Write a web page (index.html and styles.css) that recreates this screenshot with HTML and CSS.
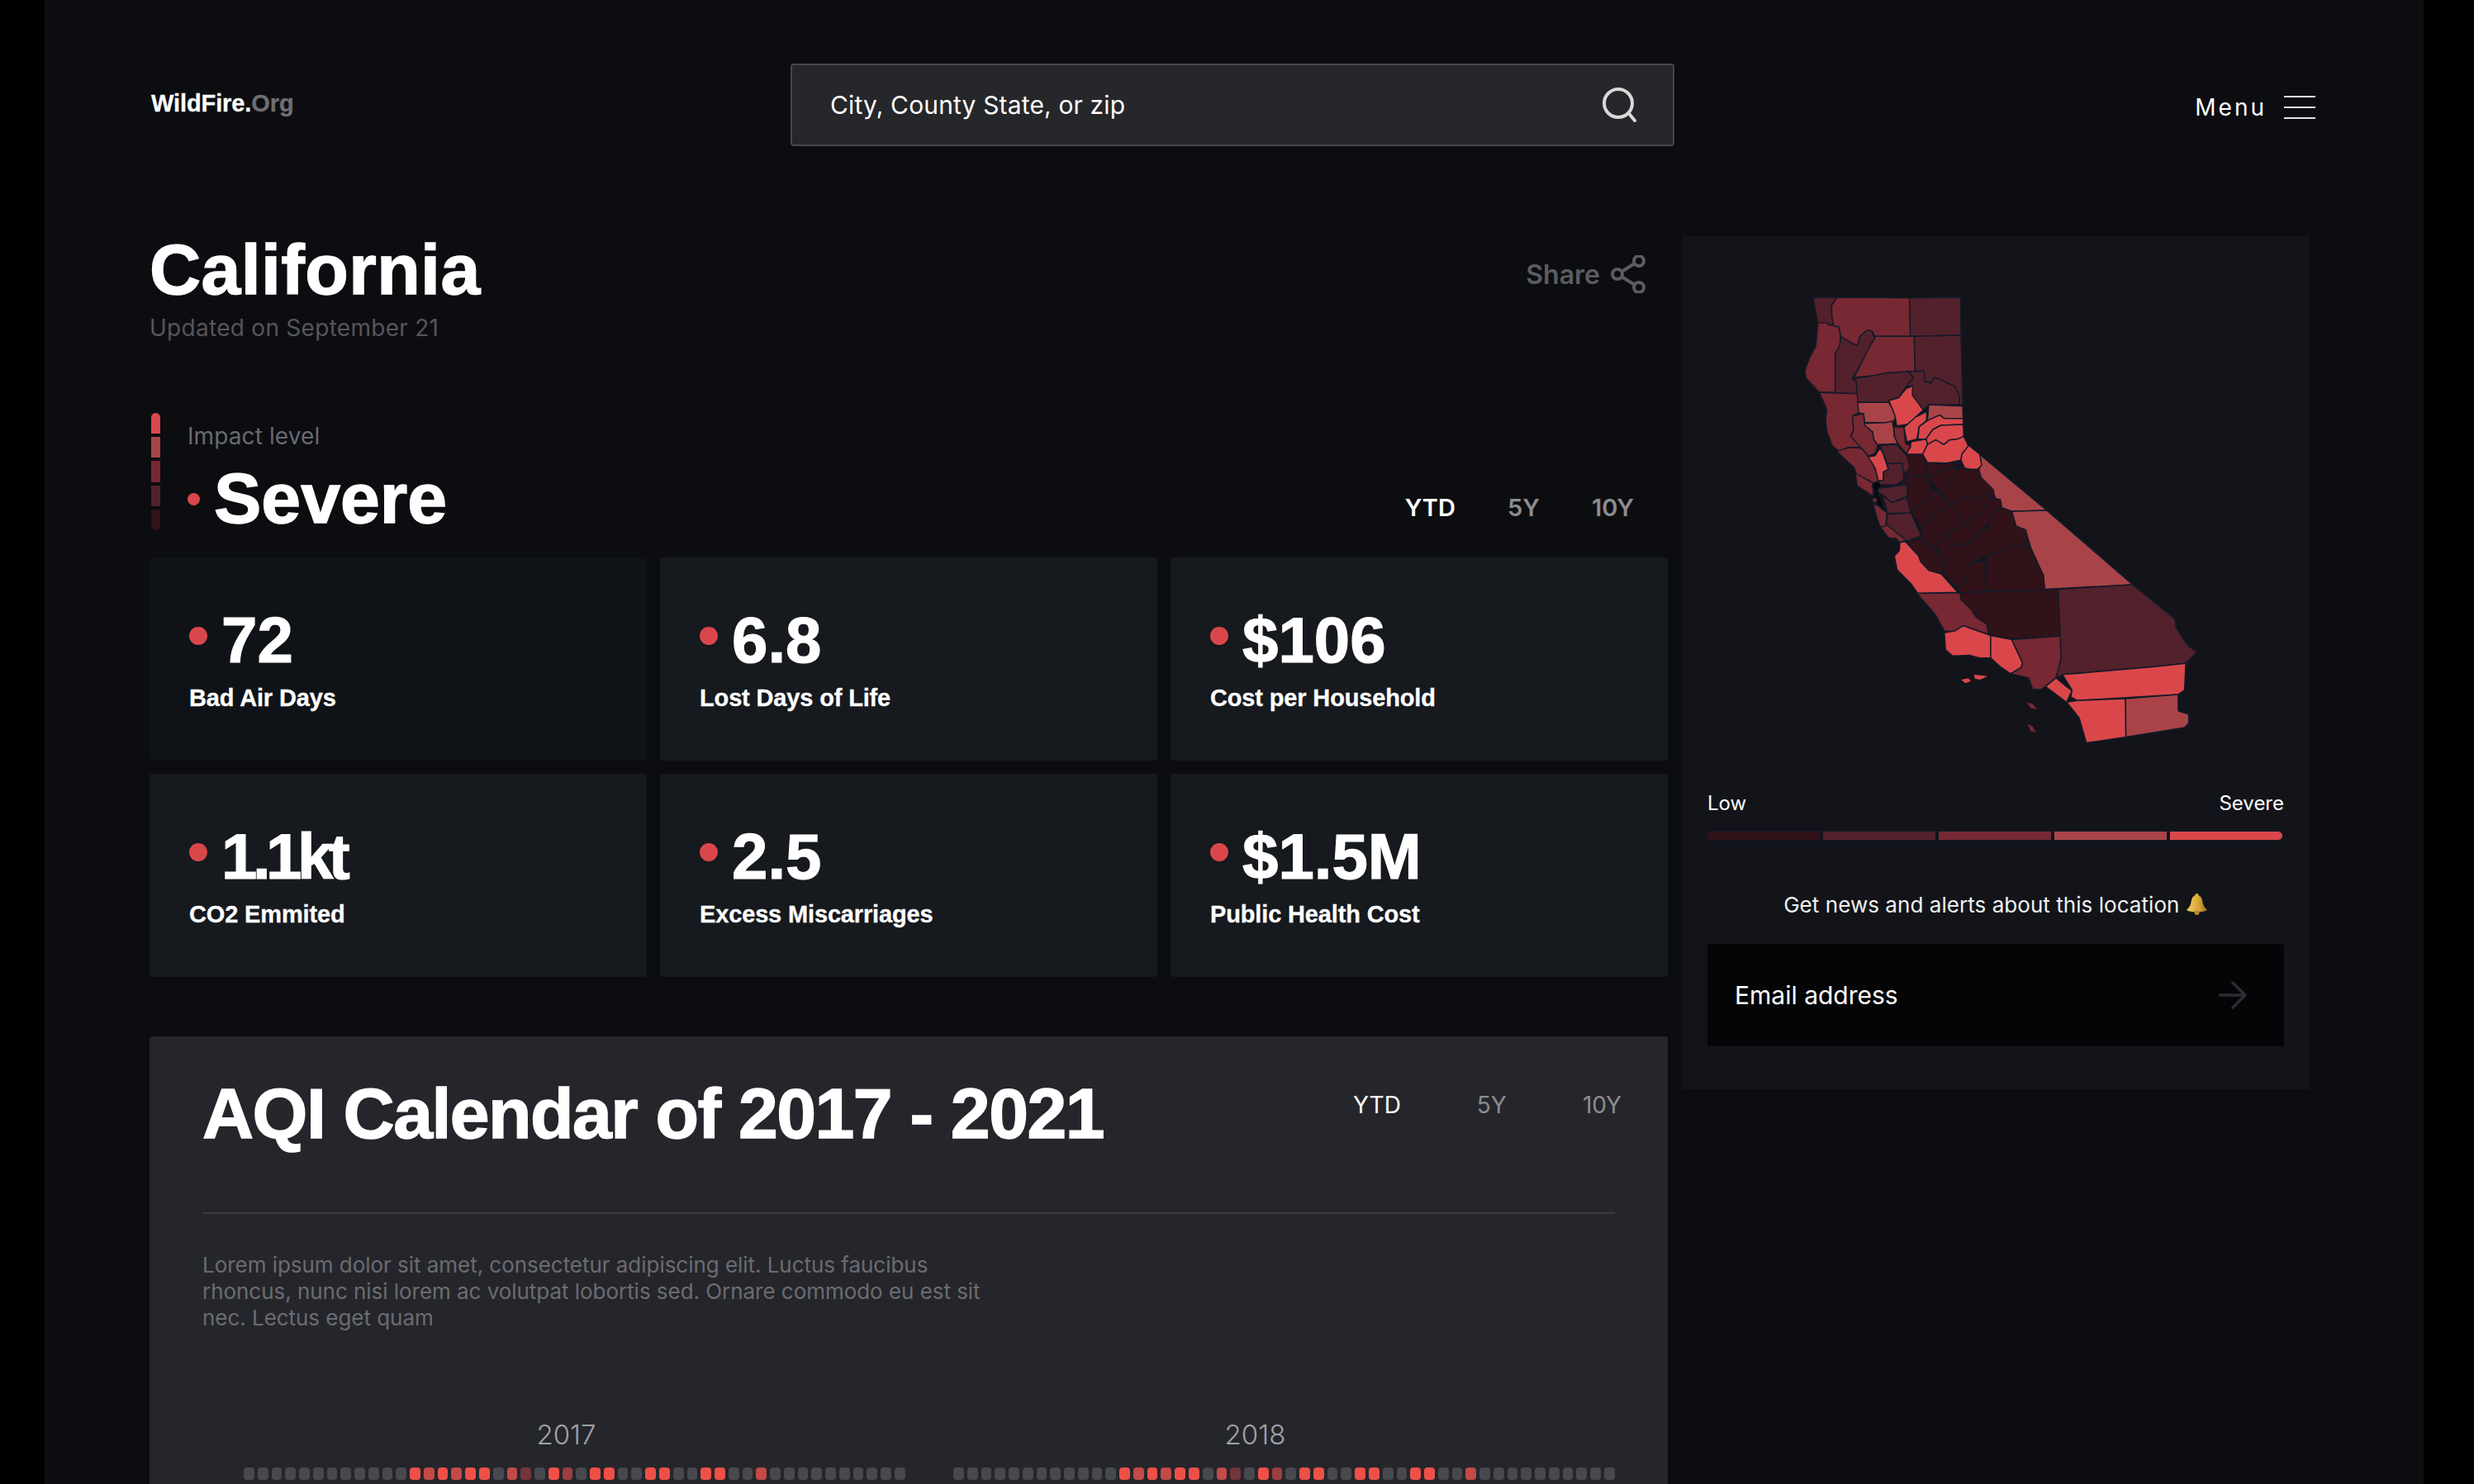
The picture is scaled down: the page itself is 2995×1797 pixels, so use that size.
FILE: index.html
```html
<!DOCTYPE html>
<html lang="en">
<head>
<meta charset="utf-8">
<title>WildFire.Org - California</title>
<link rel="stylesheet" href="styles.css">
</head>
<body>
<div class="page">
  <header class="top">
    <div class="logo">WildFire.<span class="logo-org">Org</span></div>
    <div class="search">
      <span>City, County State, or zip</span>
      <svg class="search-icon" width="42" height="42" viewBox="0 0 42 42"><circle cx="20" cy="19" r="17"/><line x1="32.5" y1="31" x2="40" y2="40"/></svg>
    </div>
    <div class="menu">
      <span>Menu</span>
      <div class="burger"><i></i><i></i><i></i></div>
    </div>
  </header>
  <div class="content">
    <main class="left">
      <div class="title-row">
        <h1 class="state">California</h1>
        <div class="share">
          <span>Share</span>
          <svg class="share-icon" width="42" height="46" viewBox="0 0 42 46"><circle cx="34" cy="7" r="6"/><circle cx="8" cy="23" r="6"/><circle cx="34" cy="39" r="6"/><line x1="13" y1="20" x2="29" y2="10"/><line x1="13" y1="26" x2="29" y2="36"/></svg>
        </div>
      </div>
      <p class="updated">Updated on September 21</p>
      <div class="impact">
        <div class="impact-main">
          <div class="scale"><i class="s5"></i><i class="s4"></i><i class="s3"></i><i class="s2"></i><i class="s1"></i></div>
          <div class="impact-text">
            <div class="impact-label">Impact level</div>
            <div class="impact-value"><i class="small-dot"></i><span>Severe</span></div>
          </div>
        </div>
        <nav class="tabs bold-tabs"><b class="on">YTD</b><b>5Y</b><b>10Y</b></nav>
      </div>
      <section class="cards">
        <article class="card card-dark"><div class="num"><i class="dot"></i><span>72</span></div><div class="lbl">Bad Air Days</div></article>
        <article class="card"><div class="num"><i class="dot"></i><span>6.8</span></div><div class="lbl">Lost Days of Life</div></article>
        <article class="card"><div class="num"><i class="dot"></i><span>$106</span></div><div class="lbl">Cost per Household</div></article>
        <article class="card"><div class="num"><i class="dot"></i><span class="tight">1.1kt</span></div><div class="lbl">CO2 Emmited</div></article>
        <article class="card"><div class="num"><i class="dot"></i><span>2.5</span></div><div class="lbl">Excess Miscarriages</div></article>
        <article class="card"><div class="num"><i class="dot"></i><span>$1.5M</span></div><div class="lbl">Public Health Cost</div></article>
      </section>
      <section class="calendar">
        <div class="cal-head">
          <h2 class="cal-title">AQI Calendar of 2017 - 2021</h2>
          <nav class="tabs light-tabs"><b class="on">YTD</b><b>5Y</b><b>10Y</b></nav>
        </div>
        <hr class="rule">
        <p class="lorem">Lorem ipsum dolor sit amet, consectetur adipiscing elit. Luctus faucibus rhoncus, nunc nisi lorem ac volutpat lobortis sed. Ornare commodo eu est sit nec. Lectus eget quam</p>
        <div class="years">
          <div class="year">
            <div class="year-label year-a">2017</div>
            <div class="days"><i></i><i></i><i></i><i></i><i></i><i></i><i></i><i></i><i></i><i></i><i></i><i></i><i class="r"></i><i class="m"></i><i class="r"></i><i class="m"></i><i class="r"></i><i class="r"></i><i></i><i class="m"></i><i class="x"></i><i></i><i class="r"></i><i class="k"></i><i></i><i class="r"></i><i class="r"></i><i></i><i></i><i class="r"></i><i class="r"></i><i></i><i></i><i class="r"></i><i class="r"></i><i></i><i></i><i class="m"></i><i></i><i></i><i></i><i></i><i></i><i></i><i></i><i></i><i></i><i></i></div>
          </div>
          <div class="year">
            <div class="year-label year-b">2018</div>
            <div class="days"><i></i><i></i><i></i><i></i><i></i><i></i><i></i><i></i><i></i><i></i><i></i><i></i><i class="r"></i><i class="m"></i><i class="r"></i><i class="m"></i><i class="r"></i><i class="r"></i><i></i><i class="m"></i><i class="x"></i><i></i><i class="r"></i><i class="k"></i><i></i><i class="r"></i><i class="r"></i><i></i><i></i><i class="r"></i><i class="r"></i><i></i><i></i><i class="r"></i><i class="r"></i><i></i><i></i><i class="m"></i><i></i><i></i><i></i><i></i><i></i><i></i><i></i><i></i><i></i><i></i></div>
          </div>
        </div>
      </section>
    </main>
    <aside class="side">
      <svg class="map" width="490" height="550" viewBox="2180 355 490 550">
        <g transform="translate(2040 280) scale(.5102 .4209)">
          <polygon class="c4" points="697,640 858,803 775,806 750,795 735,765 730,745 700,715 695,690 703,670"/>
          <polygon class="c4" points="775,806 858,803 1062,1017 853,1030 850,990 820,910 808,860 785,848"/>
          <polygon class="c2" points="885,1030 1062,1017 1162,1115 1165,1140 1180,1170 1195,1195 1215,1210 1188,1243 1110,1253 900,1275 880,1285 892,1230 890,1165"/>
          <polygon class="c1" points="652,1040 885,1030 890,1165 775,1173 720,1160 718,1130 700,1118 688,1100 678,1085 660,1068 655,1058"/>
          <polygon class="c3" points="550,1042 652,1040 655,1060 680,1090 690,1110 715,1130 720,1160 660,1135 640,1152 615,1150 595,1105"/>
          <polygon class="c5" points="615,1155 640,1150 660,1135 725,1163 725,1228 700,1228 675,1220 635,1222 618,1205"/>
          <polygon class="c5" points="725,1163 775,1175 800,1240 798,1255 772,1273 750,1255 725,1228"/>
          <polygon class="c3" points="775,1175 890,1165 892,1230 880,1285 855,1310 845,1318 825,1318 815,1285 772,1273 798,1255 800,1240"/>
          <polygon class="c5" points="855,1310 880,1285 905,1310 918,1322 905,1355"/>
          <polygon class="c5" points="895,1275 930,1272 1110,1253 1188,1243 1185,1320 1170,1333 930,1350 915,1340 918,1320"/>
          <polygon class="c5" points="905,1355 930,1350 1045,1345 1046,1455 952,1472 935,1400"/>
          <polygon class="c4" points="1045,1345 1170,1333 1170,1380 1195,1390 1195,1415 1185,1428 1046,1455"/>
          <polygon class="c5 isle" points="655,1290 672,1286 678,1295 665,1300"/>
          <polygon class="c5 isle" points="685,1276 718,1280 700,1290 688,1288"/>
          <polygon class="c3 isle" points="810,1355 825,1360 835,1375 820,1372"/>
          <polygon class="c3 isle" points="812,1417 825,1425 832,1442 820,1438"/>
        </g>
        <g transform="translate(2210 540) scale(.33333)">
          <polygon class="c1" points="295,28 355,30 368,70 368,100 340,108 300,110 295,135 262,145 285,125 295,100 290,85 300,70"/>
          <polygon class="c1" points="368,60 420,65 498,60 445,85 400,100 375,115 368,100"/>
          <polygon class="c1" points="375,115 400,100 445,85 490,78 455,120 422,178 383,130"/>
          <polygon class="c1" points="490,78 525,88 555,78 565,115 610,160 612,188 580,168 550,190 525,193 500,182 455,213 422,178 455,120"/>
          <polygon class="c1" points="300,110 335,110 368,100 383,150 383,190 350,205 312,240 300,235 298,180"/>
          <polygon class="c1" points="383,150 455,213 378,260 350,300 312,240 350,205 383,190"/>
          <polygon class="c1" points="455,213 502,290 440,315 390,370 345,335 345,300 378,260"/>
          <polygon class="c1" points="455,213 500,182 525,193 550,190 580,168 602,188 565,240 520,280 502,290"/>
          <polygon class="c1" points="602,188 635,195 640,220 605,260 600,280 570,300 545,345 480,365 455,360 440,315 502,290 520,280 565,240"/>
          <polygon class="c1" points="290,348 345,335 390,370 432,410 432,440 420,465 375,452 345,420 338,400 300,360"/>
          <polygon class="c5" points="270,350 290,348 338,400 345,420 375,452 420,465 480,532 335,535 310,500 260,450 250,400 268,380"/>
          <polygon class="c2" points="225,248 310,243 345,320 340,330 295,345 220,285"/>
          <polygon class="c3" points="200,295 220,285 295,345 268,350 255,335 230,335"/>
          <polygon class="c3" points="172,207 222,235 222,265 218,290 198,295 185,255"/>
          <polygon class="c2" points="205,178 240,205 295,188 310,243 225,245 218,215"/>
          <polygon class="c2" points="187,155 262,145 295,140 298,182 240,205 205,175 190,170"/>
          <polygon class="c3" points="108,100 130,100 175,130 172,182 115,145"/>
          <polygon class="bay" points="172,133 190,128 200,130 205,145 190,160 195,180 220,240 205,230 185,205 175,180 180,165 170,150"/>
          <polygon class="c3" points="170,190 187,190 187,205 170,205"/>
        </g>
        <g transform="translate(2040 280) scale(.5102 .4209)">
          <polygon class="c1" points="750,795 775,806 785,848 808,860 815,905 760,908 757,918 712,935 672,958 668,1005 645,1025 612,985 617,950 600,915 587,910 620,870 633,890 640,905 680,895 700,860 720,855 727,820"/>
          <polygon class="c1" points="672,958 712,950 712,1036 650,1040 645,1025 668,1005"/>
          <polygon class="c1" points="715,935 757,918 760,908 815,905 850,990 853,1032 712,1036"/>
        </g>
        <g transform="translate(2170 350) scale(.33333)">
          <polygon class="c2" points="75,30 162,30 150,50 142,60 143,100 150,130 130,130 125,122 92,122 85,85"/>
          <polygon class="c3" points="162,30 425,32 428,172 300,172 288,152 270,150 245,172 237,205 215,197 175,172 168,137 150,135 143,100 142,60"/>
          <polygon class="c2" points="425,32 610,30 612,168 428,172"/>
          <polygon class="c3" points="92,122 125,122 130,130 168,137 175,175 172,205 155,235 155,375 97,375 50,325 45,295 60,255 85,205"/>
          <polygon class="c2" points="175,172 215,197 237,205 245,172 270,150 288,152 298,180 280,210 250,270 225,310 217,325 232,335 235,380 155,378 155,235 172,205"/>
          <polygon class="c3" points="300,172 442,172 445,298 340,305 290,315 222,322 250,270 280,210 298,180"/>
          <polygon class="c2" points="442,172 612,168 618,420 605,420 607,390 590,355 540,330 515,322 503,342 480,335 478,298 445,298"/>
          <polygon class="c2" points="222,325 290,315 340,305 420,300 440,322 412,355 385,395 350,405 342,412 235,412 232,335"/>
          <polygon class="c2" points="420,300 478,298 480,335 503,342 515,322 540,330 590,355 607,390 605,420 495,420 475,440 435,385 437,352 412,355 440,322"/>
          <polygon class="c4" points="235,412 350,412 360,430 375,462 365,485 262,485 258,452 240,450"/>
          <polygon class="c4" points="258,488 340,485 362,480 368,510 370,535 382,562 308,565 295,545 290,518 260,503"/>
          <polygon class="c5" points="437,352 435,385 475,440 447,465 432,490 378,497 373,462 360,430 350,405 385,395 412,362"/>
          <polygon class="c3" points="97,375 155,378 235,380 240,450 218,462 222,510 212,535 245,565 250,575 205,575 170,590 145,570 125,520 120,470 125,440 115,415"/>
          <polygon class="c3" points="218,462 258,452 262,495 290,518 295,545 310,570 300,597 275,607 250,578 212,535 222,510"/>
          <polygon class="c3" points="160,590 205,575 250,578 275,607 300,650 312,697 295,705 230,670 225,650"/>
          <polygon class="c5" points="275,610 300,605 318,578 330,600 348,655 330,665 330,695 312,697 300,650"/>
          <polygon class="c2" points="318,568 378,565 415,605 425,640 420,660 400,670 398,632 345,635 340,625"/>
          <polygon class="c2" points="345,635 398,632 405,690 380,710 320,712 312,697 330,695 330,665 348,655"/>
          <polygon class="c3" points="368,500 405,502 410,560 428,570 415,600 385,565 370,535"/>
          <polygon class="c5" points="405,502 447,465 487,445 487,478 460,500 452,545 415,555"/>
          <polygon class="c4" points="495,420 618,425 620,470 550,470 535,458 490,478"/>
          <polygon class="c5" points="490,478 535,458 550,470 620,470 620,492 540,495 510,510 485,545 455,545 460,500"/>
          <polygon class="c5" points="540,495 620,492 622,535 600,545 570,548 550,565 520,548 490,565 485,545 510,510"/>
          <polygon class="c5" points="430,555 485,545 490,565 475,600 412,600 428,575"/>
          <polygon class="c5" points="490,565 520,548 550,565 570,548 600,545 622,535 640,572 615,600 612,622 560,632 490,630 473,600"/>
          <polygon class="c5" points="640,568 680,600 687,640 672,655 645,655 625,650 612,622 615,600"/>
        </g>
      </svg>
      <div class="legend"><span>Low</span><span>Severe</span></div>
      <div class="legend-bar"><i class="s1"></i><i class="s2"></i><i class="s3"></i><i class="s4"></i><i class="s5"></i></div>
      <p class="alerts">Get news and alerts about this location
        <svg class="bell" width="27" height="26" viewBox="0 0 27 26"><defs><linearGradient id="gold" x1="0" y1="0" x2="1" y2="0"><stop offset="0" stop-color="#f0d060"/><stop offset=".55" stop-color="#d9a93a"/><stop offset="1" stop-color="#9c7420"/></linearGradient></defs><path class="bell-body" d="M13.5 0c1.6 0 2.4 1 2.4 2.4 3 1 4 3.6 4.4 7.2.4 4 2 7 5.7 10.4-2 1.6-7.200 2.300-12.500 2.300S3 21.600 1 20c3.700-3.400 5.300-6.400 5.700-10.400.4-3.600 1.400-6.200 4.400-7.200C11.100 1 11.900 0 13.500 0z"/><circle class="bell-clap" cx="13.500" cy="23" r="3"/></svg>
      </p>
      <div class="email">
        <span>Email address</span>
        <svg class="arrow" width="34" height="34" viewBox="0 0 34 34"><line x1="1" y1="17" x2="32" y2="17"/><polyline points="17,2 32,17 17,32"/></svg>
      </div>
    </aside>
  </div>
</div>
</body>
</html>
```
FILE: styles.css
```css
* { box-sizing: border-box; }
html, body { margin: 0; padding: 0; background: #000; }
body { font-family: "Inter", "Liberation Sans", sans-serif; color: #fff; }
.page { width: 2880px; height: 1797px; margin-left: 54px; background: #0c0d10; overflow: hidden; padding: 77px 0 0 127px; }
h1, h2, p { margin: 0; font-weight: normal; }
i { display: block; font-style: normal; }

.top { display: flex; align-items: flex-start; height: 100px; margin-bottom: 99px; padding-right: 131px; }
.logo { width: 776px; font: bold 29px/36px "Liberation Sans", sans-serif; letter-spacing: -.1px; margin-top: 30px; padding-left: 2px; -webkit-text-stroke: .3px currentColor; }
.logo-org { color: #6e6f73; }
.search { width: 1070px; height: 100px; background: #26272a; border: 2px solid #46474b; border-radius: 4px; display: flex; align-items: center; justify-content: space-between; padding: 0 44px 0 46px; font-size: 30px; letter-spacing: .15px; }
.search-icon { fill: none; stroke: #d9d9d9; stroke-width: 4; stroke-linecap: round; }
.menu { margin-left: auto; display: flex; align-items: center; gap: 21px; font-size: 28px; letter-spacing: 3px; margin-top: 36px; }
.burger { width: 38px; display: flex; flex-direction: column; gap: 11px; }
.burger i { height: 2px; background: #e6e6e6; }

.content { display: grid; grid-template-columns: 1838px 760px; column-gap: 17px; align-items: start; }
.left { min-width: 0; }
.title-row { display: flex; justify-content: space-between; align-items: flex-start; padding-right: 27px; }
.state { font: bold 86px/100px "Liberation Sans", sans-serif; letter-spacing: .4px; -webkit-text-stroke: 1.400px #fff; }
.share { display: flex; align-items: center; gap: 13px; color: #5b5c62; font-size: 32px; font-weight: 600; margin-top: 33px; }
.share-icon { fill: none; stroke: #5b5c62; stroke-width: 4px; }
.updated { font-size: 28px; line-height: 36px; letter-spacing: .28px; color: #55565a; margin-top: 3px; }

.impact { display: flex; justify-content: space-between; align-items: flex-end; margin-top: 85px; }
.impact-main { display: flex; gap: 33px; height: 153px; margin-left: 2px; }
.scale { width: 11px; height: 142px; display: flex; flex-direction: column; gap: 4px; border-radius: 6px; overflow: hidden; }
.scale i { flex: 1; }
.s1 { background: #311218; }
.s2 { background: #52212c; }
.s3 { background: #772832; }
.s4 { background: #a84448; }
.s5 { background: #da474b; }
.impact-text { padding-top: 10px; }
.impact-label { font-size: 28px; line-height: 36px; letter-spacing: .1px; color: #676a72; }
.impact-value { display: flex; align-items: center; gap: 17px; font: bold 86px/100px "Liberation Sans", sans-serif; -webkit-text-stroke: 1.400px #fff; margin-top: 7px; }
.small-dot { width: 15px; height: 15px; border-radius: 50%; background: #da474b; margin-top: 2px; }
.tabs { display: flex; gap: 66px; font-size: 28px; line-height: 36px; }
.tabs b { color: #8c8c8f; }
.tabs b.on { color: #fff; }
.bold-tabs { gap: 63px; font-size: 29px; font-weight: 600; margin: 0 41px 20px 0; }
.bold-tabs b { font-weight: 600; }
.light-tabs { gap: 92px; margin: 22px -8px 0 0; }
.light-tabs b { font-weight: 400; }

.cards { display: grid; grid-template-columns: repeat(3, 602px); grid-auto-rows: 246px; gap: 16px; margin-top: 22px; }
.card { background: #16191e; border-radius: 3px; padding: 58px 0 0 48px; }
.card-dark { background: #0f1318; }
.num { display: flex; align-items: flex-start; gap: 17px; font: bold 78px/84px "Liberation Sans", sans-serif; -webkit-text-stroke: 1.200px #fff; }
.tight { letter-spacing: -5.500px; }
.dot { width: 22px; height: 22px; border-radius: 50%; background: #da474b; margin-top: 26px; }
.lbl { font: bold 29px/36px "Liberation Sans", sans-serif; letter-spacing: -.15px; margin-top: 10px; -webkit-text-stroke: .3px #fff; }

.calendar { margin-top: 72px; background: #25262b; border-radius: 3px; padding: 43px 64px 0; height: 560px; }
.cal-head { display: flex; justify-content: space-between; align-items: flex-start; }
.cal-title { font: bold 86px/100px "Liberation Sans", sans-serif; letter-spacing: -1.550px; -webkit-text-stroke: 1.400px #fff; }
.rule { border: 0; height: 2px; background: #3a3b3f; margin: 70px 0 0; }
.lorem { width: 960px; font-size: 26px; line-height: 32px; letter-spacing: -.04px; color: #6b6c71; margin-top: 46px; }
.years { display: flex; justify-content: flex-end; gap: 58px; margin-top: 105px; }
.year { width: 801px; }
.year-label { font-size: 33px; font-weight: 300; line-height: 40px; color: #a0a1a5; text-align: center; }
.year-a { padding-right: 20px; }
.year-b { padding-right: 70px; }
.days { display: flex; gap: 4px; margin-top: 20px; }
.days i { flex: 1; height: 15px; border-radius: 4px; background: #48494e; }
.days .r { background: #ee5048; }
.days .m { background: #c34a47; }
.days .k { background: #9b3f3f; }
.days .x { background: #733539; }

.side { background: #12141a; margin-top: 10px; padding: 69px 31px 52px; }
.map { display: block; margin-left: 113px; overflow: visible; }
.map polygon { stroke: #151a28; stroke-width: 1.500px; stroke-linejoin: round; vector-effect: non-scaling-stroke; }
.map .isle { stroke: none; }
.c1 { fill: #311218; }
.c2 { fill: #52212c; }
.c3 { fill: #772832; }
.c4 { fill: #a84448; }
.c5 { fill: #da474b; }
.bay { fill: #08090c; }
.legend { display: flex; justify-content: space-between; font-size: 24px; line-height: 30px; color: #fff; margin-top: 53px; width: 698px; }
.legend-bar { width: 696px; height: 10px; margin-top: 19px; display: flex; gap: 4px; border-radius: 5px; overflow: hidden; box-shadow: 0 0 0 1px #141b2b; }
.legend-bar i { flex: 1; }
.alerts { font-size: 26px; line-height: 32px; letter-spacing: .05px; color: #f0f0f0; text-align: center; margin-top: 63px; white-space: nowrap; }
.bell { vertical-align: -3px; }
.bell-body { fill: url(#gold); }
.bell-clap { fill: #b98a2a; }
.email { width: 698px; height: 124px; margin-top: 31px; background: #040506; border-radius: 3px; display: flex; align-items: center; justify-content: space-between; padding: 0 45px 0 33px; font-size: 30px; }
.arrow { fill: none; stroke: #2c2d33; stroke-width: 3.500; stroke-linecap: round; }
```
